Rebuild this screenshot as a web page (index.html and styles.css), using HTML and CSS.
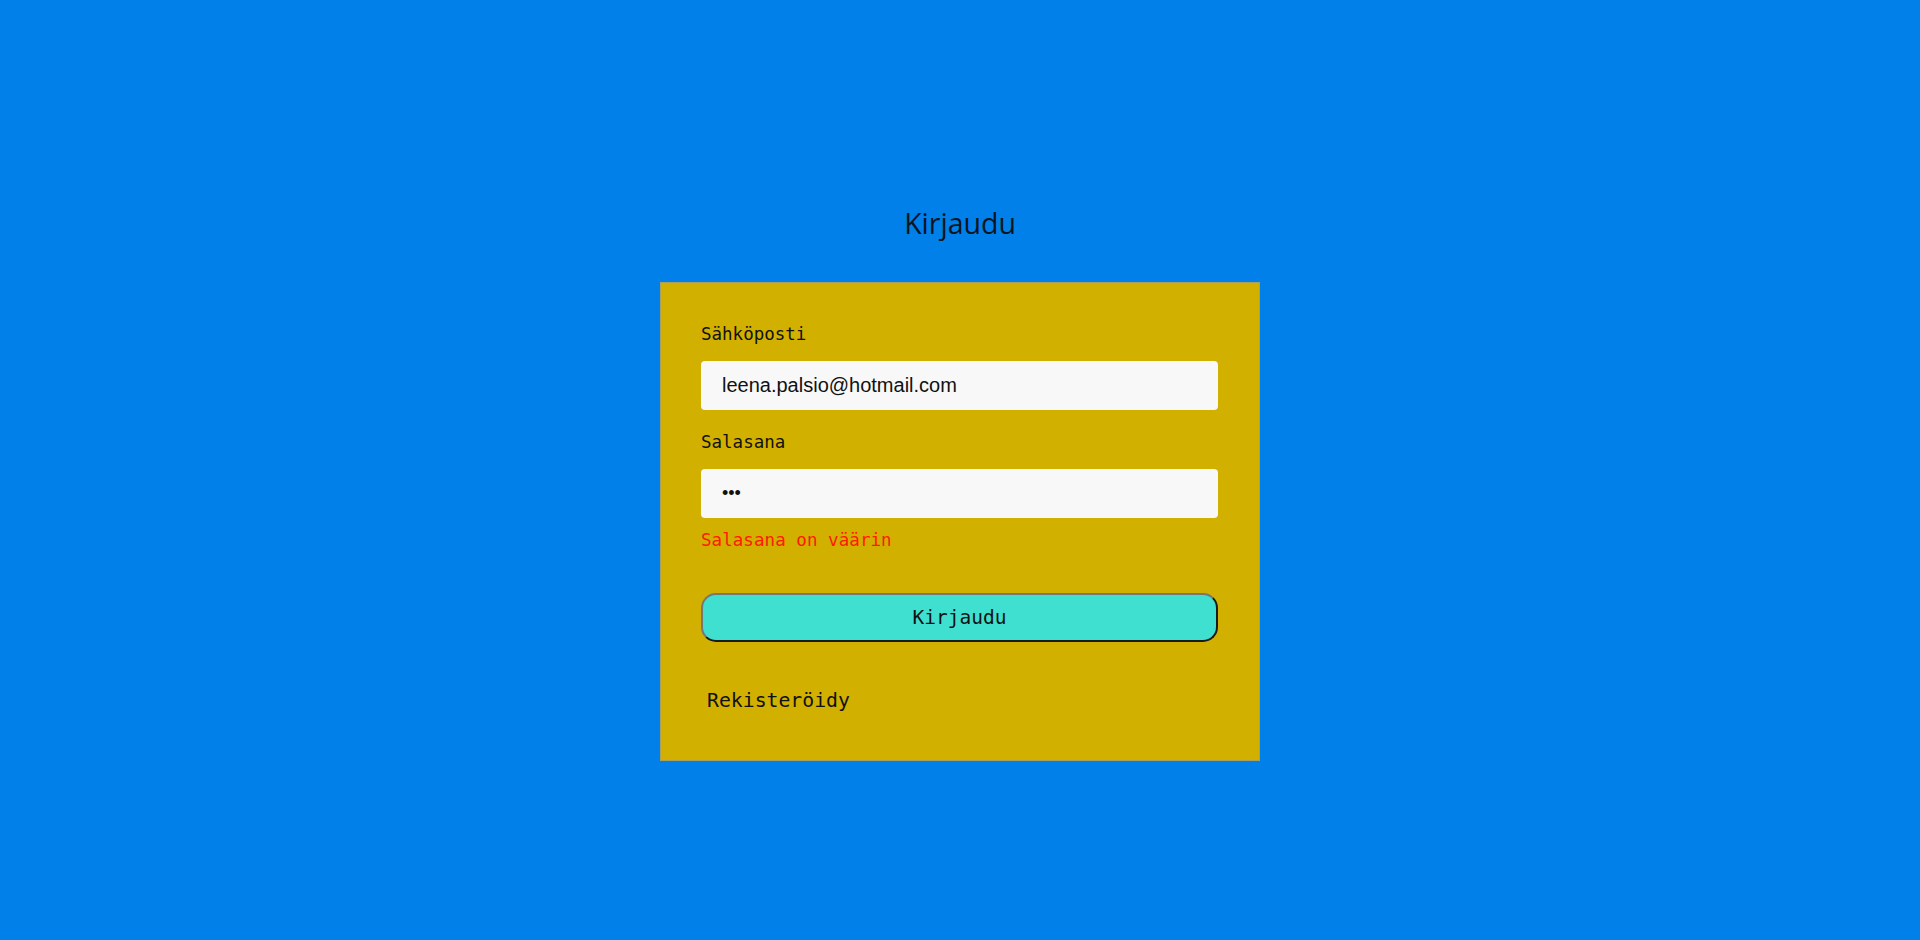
FILE: index.html
```html
<!DOCTYPE html>
<html lang="fi">
<head>
<meta charset="utf-8">
<title>Kirjaudu</title>
<link rel="stylesheet" href="styles.css">
</head>
<body>
<main class="page">
  <h1 class="title">Kirjaudu</h1>
  <form class="card">
    <label class="label" for="email">Sähköposti</label>
    <input class="field" id="email" type="email" value="leena.palsio@hotmail.com">
    <label class="label label-second" for="pw">Salasana</label>
    <input class="field field-pw" id="pw" type="password" value="abc">
    <p class="error">Salasana on väärin</p>
    <button class="submit" type="button">Kirjaudu</button>
    <button class="register" type="button">Rekisteröidy</button>
  </form>
</main>
</body>
</html>
```

FILE: styles.css
```css
html, body {
  margin: 0;
  padding: 0;
  height: 100%;
}
body {
  background: #0080e8;
  font-family: "DejaVu Sans Mono", monospace;
}
.page {
  display: flex;
  flex-direction: column;
  align-items: center;
  padding-top: 204px;
}
.title {
  margin: 0;
  font-family: "Open Sans", "Noto Sans", sans-serif;
  font-weight: 400;
  font-size: 28.5px;
  line-height: 38px;
  color: #0b1622;
}
.card {
  margin-top: 40px;
  box-sizing: border-box;
  width: 600px;
  background: #d1b000;
  border: 1px solid #a8a060;
  padding: 41px 41px 47px 40px;
  display: flex;
  flex-direction: column;
  align-items: stretch;
}
.label {
  font-size: 17.5px;
  line-height: 20px;
  color: #111;
}
.label-second {
  margin-top: 22px;
}
.field {
  margin-top: 17px;
  box-sizing: border-box;
  height: 49px;
  border: none;
  border-radius: 4px;
  background: #f8f8f8;
  padding: 0 21px;
  font-family: "Liberation Sans", Arial, sans-serif;
  font-size: 20px;
  color: #111;
  outline: none;
}
.field-pw {
  font-size: 18px;
}
.error {
  margin: 12px 0 0;
  font-size: 17.6px;
  line-height: 20px;
  color: #ff1a00;
}
.submit {
  margin-top: 43px;
  box-sizing: border-box;
  height: 49px;
  border: 2px solid;
  border-color: #777 #1a1a1a #1a1a1a #777;
  border-radius: 15px;
  background: #40e0d0;
  font-family: "DejaVu Sans Mono", monospace;
  font-size: 19.5px;
  color: #111;
  cursor: pointer;
}
.register {
  align-self: flex-start;
  margin-top: 47px;
  padding: 0 6px;
  border: none;
  background: transparent;
  font-family: "DejaVu Sans Mono", monospace;
  font-size: 19.8px;
  line-height: 24px;
  color: #111;
  cursor: pointer;
}
```
